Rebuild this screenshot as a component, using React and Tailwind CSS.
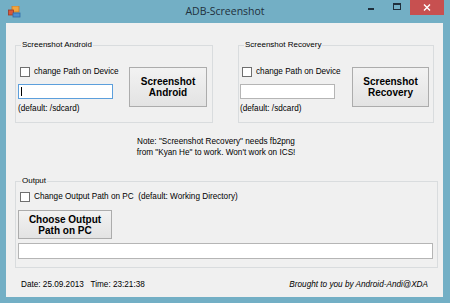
import React from 'react';

const sans = "font-['Liberation_Sans',Arial,sans-serif]";

const CheckBox = ({ label, className = '' }) => (
  <div className={`flex items-center h-[10px] ${className}`}>
    <div className="w-[10px] h-[10px] border border-[#6f6f6f] bg-white shrink-0" />
    <span className="ml-[4px] text-[8.2px] leading-[10px] whitespace-pre text-black">{label}</span>
  </div>
);

const TextBox = ({ className = '', focused = false, caret = false }) => (
  <div
    className={`h-[15px] bg-white border flex items-center ${
      focused ? 'border-[#5c9fdc]' : 'border-[#b5b5b5]'
    } ${className}`}
  >
    {caret && <div className="ml-[2px] w-[1px] h-[9px] bg-black" />}
  </div>
);

const WinButton = ({ lines, className = '' }) => (
  <div
    className={`flex flex-col items-center justify-center border border-[#acacac] bg-gradient-to-b from-[#f2f2f2] to-[#e3e3e3] font-bold text-[10px] leading-[11px] text-black ${className}`}
  >
    {lines.map((l) => (
      <span key={l}>{l}</span>
    ))}
  </div>
);

const GroupBox = ({ title, className = '', children }) => (
  <div className={`relative border border-[#d9dcde] ${className}`}>
    <span className="absolute -top-[6px] left-[5px] px-[1px] bg-[#f0f0f0] text-[8px] leading-[10px] text-black">
      {title}
    </span>
    {children}
  </div>
);

const ShotGroup = ({ title, width, padLeft, boxMl, btnMl, btnW, btnLines, focused }) => (
  <GroupBox title={title} className={`${width} h-[78px]`}>
    <div className={`flex pt-[21px] ${padLeft}`}>
      <div className="w-[95px] flex flex-col">
        <CheckBox label="change Path on Device" className={boxMl} />
        <TextBox className="mt-[7px] w-[95px]" focused={focused} caret={focused} />
        <span className="mt-[5px] text-[8.2px] leading-[10px]">(default: /sdcard)</span>
      </div>
      <WinButton lines={btnLines} className={`${btnMl} ${btnW} h-[40px]`} />
    </div>
  </GroupBox>
);

const AppIcon = () => (
  <svg width="13" height="12" viewBox="0 0 13 12">
    <rect x="4" y="0" width="7" height="6" fill="#f0a640" stroke="#c87a2a" strokeWidth="0.8" />
    <rect x="0.5" y="4" width="5" height="5" fill="#d8583a" stroke="#9a3a28" strokeWidth="0.8" />
    <rect x="5" y="7" width="7" height="4" fill="#4e8fd0" stroke="#2f6aa8" strokeWidth="0.8" />
  </svg>
);

export default function App() {
  return (
    <div className={`w-[450px] h-[303px] bg-[#73afc5] flex flex-col overflow-hidden ${sans}`}>
      {/* title bar */}
      <div className="h-[23px] grid grid-cols-[1fr_auto_1fr] items-start">
        <div className="pl-[8px] pt-[6px]">
          <AppIcon />
        </div>
        <div className="pt-[4px] font-['Open_Sans',sans-serif] text-[10.5px] leading-[15px] text-[#1f2f3c]">
          ADB-Screenshot
        </div>
        <div className="flex justify-end pr-[6px]">
          <div className="w-[26px] h-[15px] flex items-center justify-center">
            <div className="w-[6px] h-[2px] mt-[3px] bg-[#1f2f3c]" />
          </div>
          <div className="w-[26px] h-[15px] flex items-center justify-center">
            <div className="w-[8px] h-[7px] border border-[#1f2f3c] border-t-2 -mt-[2px]" />
          </div>
          <div className="w-[34px] h-[15px] bg-[#c75050] flex items-center justify-center text-white">
            <svg width="8" height="7" viewBox="0 0 8 7">
              <path d="M1 0.5 L7 6.5 M7 0.5 L1 6.5" stroke="#ffffff" strokeWidth="1.4" />
            </svg>
          </div>
        </div>
      </div>

      {/* client area */}
      <div className="ml-[6px] w-[437px] h-[274px] bg-[#f0f0f0] text-black flex flex-col">
        <div className="flex pl-[9px] pt-[22px]">
          <ShotGroup
            title="Screenshot Android"
            width="w-[198px]"
            padLeft="pl-[2px]"
            boxMl="ml-[2px]"
            btnMl="ml-[16px]"
            btnW="w-[78px]"
            btnLines={['Screenshot', 'Android']}
            focused
          />
          <div className="ml-[25px]">
            <ShotGroup
              title="Screenshot Recovery"
              width="w-[196px]"
              padLeft="pl-[1px]"
              boxMl="ml-[2px]"
              btnMl="ml-[17px]"
              btnW="w-[77px]"
              btnLines={['Screenshot', 'Recovery']}
            />
          </div>
        </div>

        <div className="w-[420px] mt-[13px] text-center text-[8.2px] leading-[11px]">
          <div>Note: "Screenshot Recovery" needs fb2png</div>
          <div>from "Kyan He" to work. Won't work on ICS!</div>
        </div>

        <div className="pl-[9px] mt-[23px]">
          <GroupBox title="Output" className="w-[423px] h-[87px]">
            <div className="flex flex-col pl-[2px] pt-[10px]">
              <CheckBox label="Change Output Path on PC  (default: Working Directory)" className="ml-[2px]" />
              <WinButton lines={['Choose Output', 'Path on PC']} className="mt-[8px] w-[94px] h-[29px]" />
              <TextBox className="mt-[4px] w-[415px] h-[16px]" />
            </div>
          </GroupBox>
        </div>

        <div className="flex justify-between px-[15px] mt-[12px] text-[8.2px] leading-[10px]">
          <span className="whitespace-pre">Date: 25.09.2013   Time: 23:21:38</span>
          <span className="italic">Brought to you by Android-Andi@XDA</span>
        </div>
      </div>
    </div>
  );
}
